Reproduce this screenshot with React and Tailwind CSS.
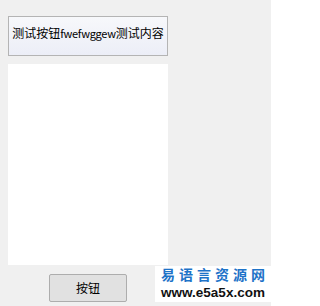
import React from 'react';

const cjk = { fontFamily: '"SimSun", "Noto Sans CJK SC", sans-serif' };

const App = () => {
    return (
        <div className="relative w-[271px] h-[306px] bg-[#f0f0f0] overflow-hidden" style={cjk}>
            <div className="flex flex-col pl-[8px] pt-[16px]">
                <button className="w-[160px] h-[40px] border border-[#b4b4b4] bg-gradient-to-b from-[#f7f8fb] to-[#eceef7] flex items-center justify-center pb-[6px] text-[12px] leading-[14px] text-black whitespace-nowrap">
                    测试按钮<span className="text-[11px] tracking-[-0.3px]">fwefwggew</span>测试内容
                </button>
                <div className="w-[160px] h-[201px] bg-white mt-[8px]" />
                <div className="flex mt-[9px]">
                    <button className="ml-[41px] w-[78px] h-[28px] border border-[#adadad] rounded-[2px] bg-[#e1e1e1] flex items-center justify-center text-[12px] text-black">
                        按钮
                    </button>
                </div>
            </div>

            <div className="absolute left-[155px] top-[266px] w-[116px] h-[36px] bg-white flex flex-col items-center whitespace-nowrap">
                <div className="text-[14px] leading-[17px] text-[#1e73c8] tracking-[4px] pl-[4px] font-bold">
                    易语言资源网
                </div>
                <div className="text-[13.5px] leading-[16px] text-[#111] font-bold font-['Liberation_Sans',sans-serif] mt-[2px]">
                    www.e5a5x.com
                </div>
            </div>
        </div>
    );
};

export default App;
